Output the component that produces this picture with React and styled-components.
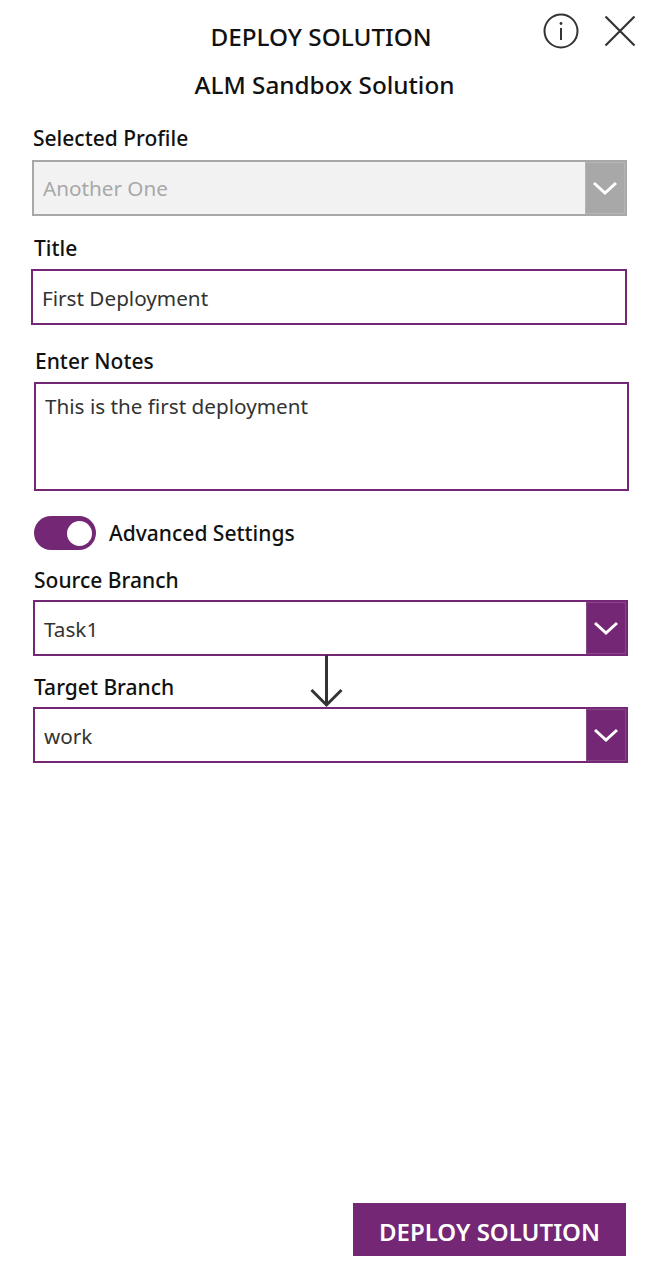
import styled, { createGlobalStyle } from 'styled-components';

const purple = '#742774';

const GlobalStyle = createGlobalStyle`
  html, body {
    margin: 0;
    padding: 0;
    background: #fff;
  }
  * {
    box-sizing: border-box;
  }
`;

const Page = styled.div`
  position: relative;
  display: flex;
  flex-direction: column;
  height: 1277px;
  overflow: hidden;
  font-family: 'Noto Sans', 'Open Sans', sans-serif;
  color: #111;
`;

const Header = styled.header`
  position: relative;
  height: 64px;
  padding-top: 20px;
`;

const Title = styled.h1`
  margin: 0;
  padding-right: 7px;
  font-size: 24.3px;
  line-height: 34px;
  font-weight: 500;
  text-align: center;
`;

const Subtitle = styled.h2`
  margin: 0;
  height: 55px;
  font-size: 24.3px;
  line-height: 42px;
  font-weight: 500;
  text-align: center;
`;

const Icons = styled.div`
  position: absolute;
  top: 13px;
  left: 543px;
  display: flex;
  gap: 25px;
  align-items: center;
`;

const Label = styled.div`
  height: ${p => p.$h || 28}px;
  margin-left: ${p => p.$x || 34}px;
  padding-top: ${p => p.$top || 0}px;
  font-size: 21px;
  line-height: 26px;
  font-weight: 500;
  color: #111;
`;

const Box = styled.div`
  display: flex;
  width: ${p => p.$w || 595}px;
  height: ${p => p.$h || 56}px;
  margin-left: ${p => p.$x}px;
  margin-bottom: ${p => p.$mb || 0}px;
  padding: ${p => (p.$multi ? '7px 9px' : '0 9px')};
  align-items: ${p => (p.$multi ? 'flex-start' : 'center')};
  border: 2px solid ${p => (p.$disabled ? '#a8a8a8' : purple)};
  background: ${p => (p.$disabled ? '#f2f2f2' : '#fff')};
  color: ${p => (p.$disabled ? '#a8a8a8' : '#333')};
  font-size: 20.7px;
  line-height: 30px;
`;

const Value = styled.span`
  flex: 1;
  padding-top: ${p => p.$top || 0}px;
`;

const Caret = styled.div`
  display: flex;
  align-items: center;
  justify-content: center;
  width: 40px;
  height: 52px;
  margin-right: -9px;
  background: ${p => (p.$disabled ? '#a8a8a8' : purple)};
  box-shadow: inset 0 0 0 1px rgba(255, 255, 255, 0.15);
`;

const ToggleRow = styled.div`
  display: flex;
  align-items: center;
  gap: 13px;
  height: 34px;
  margin: 25px 0 17px 34px;
  font-size: 21px;
  font-weight: 500;
`;

const Track = styled.div`
  display: flex;
  align-items: center;
  justify-content: flex-end;
  width: 62px;
  height: 34px;
  padding-right: 4px;
  border-radius: 17px;
  background: ${purple};
`;

const Knob = styled.div`
  width: 25px;
  height: 25px;
  border-radius: 50%;
  background: #fff;
`;

const FlowArrow = styled.svg`
  position: absolute;
  left: 309px;
  top: 655px;
`;

const Footer = styled.div`
  display: flex;
  justify-content: flex-end;
  margin-top: auto;
  padding: 0 23px 21px 0;
`;

const DeployButton = styled.button`
  width: 273px;
  height: 53px;
  padding: 3px 0 0;
  border: 0;
  background: ${purple};
  color: #fff;
  font-family: inherit;
  font-size: 24px;
  font-weight: 600;
`;

const Chevron = () => (
  <svg width="26" height="16" viewBox="0 0 26 16" fill="none">
    <path d="M2 3l11 10L24 3" stroke="#fff" strokeWidth="3" />
  </svg>
);

const Select = ({ value, x, mb, disabled }) => (
  <Box $x={x} $mb={mb} $disabled={disabled}>
    <Value $top={disabled ? 0 : 2}>{value}</Value>
    <Caret $disabled={disabled}>
      <Chevron />
    </Caret>
  </Box>
);

const App = () => (
  <Page>
    <GlobalStyle />
    <Header>
      <Title>DEPLOY SOLUTION</Title>
      <Icons>
        <svg width="36" height="36" viewBox="0 0 36 36" fill="none" stroke="#333">
          <circle cx="18" cy="18" r="16.5" strokeWidth="2" />
          <path d="M18 15v12" strokeWidth="2" />
          <circle cx="18" cy="10.5" r="1.4" fill="#333" stroke="none" />
        </svg>
        <svg width="32" height="32" viewBox="0 0 32 32" fill="none" stroke="#333" strokeWidth="2.2">
          <path d="M1.5 1.5l29 29M30.5 1.5l-29 29" />
        </svg>
      </Icons>
    </Header>
    <Subtitle>ALM Sandbox Solution</Subtitle>
    <Label $x={33} $h={41} $top={6}>Selected Profile</Label>
    <Select value="Another One" x={32} mb={19} disabled />
    <Label $h={34}>Title</Label>
    <Box $x={31} $w={596} $mb={23}>
      <Value $top={1}>First Deployment</Value>
    </Box>
    <Label $x={35} $h={34}>Enter Notes</Label>
    <Box $x={34} $h={109} $multi>This is the first deployment</Box>
    <ToggleRow>
      <Track>
        <Knob />
      </Track>
      Advanced Settings
    </ToggleRow>
    <Label $h={33}>Source Branch</Label>
    <Select value="Task1" x={33} mb={18} />
    <Label $h={33}>Target Branch</Label>
    <Select value="work" x={33} />
    <FlowArrow width="36" height="54" viewBox="0 0 36 54" fill="none" stroke="#333" strokeWidth="3">
      <path d="M17.5 0v50M2.5 35l15 15 15-15" />
    </FlowArrow>
    <Footer>
      <DeployButton>DEPLOY SOLUTION</DeployButton>
    </Footer>
  </Page>
);

export default App;
